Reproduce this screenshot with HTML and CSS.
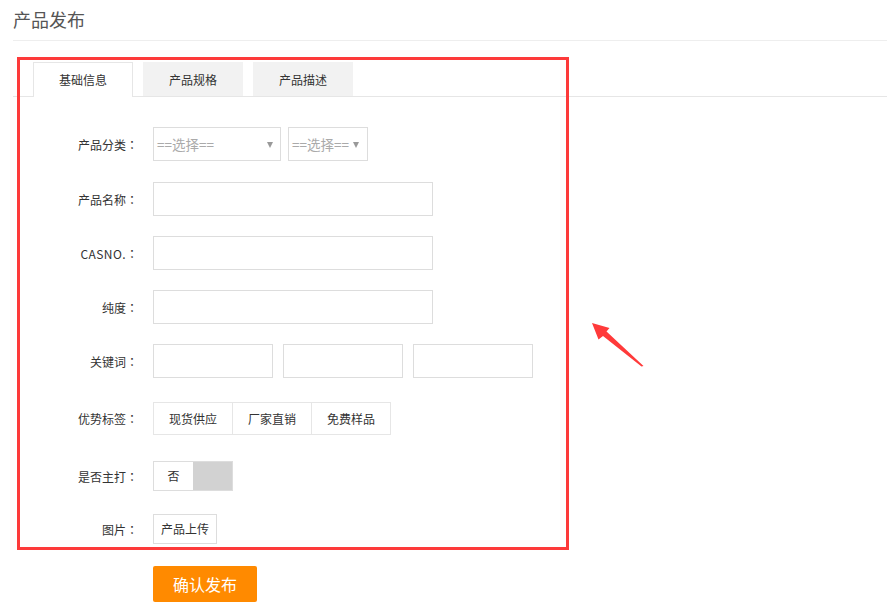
FILE: index.html
```html
<!DOCTYPE html>
<html lang="zh-CN">
<head>
<meta charset="utf-8">
<title>产品发布</title>
<link rel="stylesheet" href="styles.css">
</head>
<body>
<div class="page">
  <h1 class="page-title">产品发布</h1>
  <div class="tabs">
    <div class="tab active">基础信息</div>
    <div class="tab">产品规格</div>
    <div class="tab">产品描述</div>
  </div>
  <form class="form">
    <div class="row row-cat">
      <label class="label">产品分类<span class="colon" lang="zh-TW">：</span></label>
      <div class="select select-wide">==选择==</div>
      <div class="select select-narrow">==选择==</div>
    </div>
    <div class="row">
      <label class="label">产品名称<span class="colon" lang="zh-TW">：</span></label>
      <input class="input input-long" type="text">
    </div>
    <div class="row">
      <label class="label label-latin">CASNO.<span class="colon" lang="zh-TW">：</span></label>
      <input class="input input-long" type="text">
    </div>
    <div class="row">
      <label class="label">纯度<span class="colon" lang="zh-TW">：</span></label>
      <input class="input input-long" type="text">
    </div>
    <div class="row row-kw">
      <label class="label">关键词<span class="colon" lang="zh-TW">：</span></label>
      <input class="input input-short" type="text">
      <input class="input input-short" type="text">
      <input class="input input-short" type="text">
    </div>
    <div class="row row-tags">
      <label class="label">优势标签<span class="colon" lang="zh-TW">：</span></label>
      <div class="seg">
        <span class="seg-item">现货供应</span>
        <span class="seg-item">厂家直销</span>
        <span class="seg-item">免费样品</span>
      </div>
    </div>
    <div class="row row-toggle">
      <label class="label">是否主打<span class="colon" lang="zh-TW">：</span></label>
      <div class="toggle"><span class="toggle-text">否</span><span class="toggle-knob"></span></div>
    </div>
    <div class="row row-pic">
      <label class="label">图片<span class="colon" lang="zh-TW">：</span></label>
      <span class="upload">产品上传</span>
    </div>
    <div class="row row-submit">
      <span class="label"></span>
      <button type="button" class="submit">确认发布</button>
    </div>
  </form>
</div>
<div class="highlight"></div>
<svg class="pointer" width="70" height="60" viewBox="585 315 70 60" xmlns="http://www.w3.org/2000/svg">
  <polygon points="592,323 609.5,328 606.5,331.5 643.5,366 641.5,366.5 603,336 598.5,339.5" fill="#ff3a3a"/>
</svg>
</body>
</html>
```

FILE: styles.css
```css
* { box-sizing: border-box; }

body {
  margin: 0;
  background: #fff;
  font-family: "Noto Sans CJK SC", "Noto Sans", "Liberation Sans", sans-serif;
  color: #333;
  font-size: 12px;
}

.page {
  margin-left: 13px;
}

.page-title {
  margin: 0;
  height: 41px;
  line-height: 38px;
  font-size: 18px;
  font-weight: normal;
  color: #555;
  border-bottom: 1px solid #eee;
}

.tabs {
  display: flex;
  gap: 10px;
  margin-top: 21px;
  padding-left: 20px;
  height: 35px;
  border-bottom: 1px solid #e6e6e6;
}

.tab {
  width: 100px;
  height: 34px;
  line-height: 35px;
  text-align: center;
  background: #f2f2f2;
  color: #333;
  font-size: 12px;
}

.tab.active {
  background: #fff;
  border: 1px solid #e6e6e6;
  border-bottom: none;
  height: 35px;
  line-height: 34px;
}

.form {
  padding-top: 30px;
}

.row {
  display: flex;
  align-items: center;
  margin-bottom: 20px;
}

.row-cat { margin-bottom: 21px; }
.row-kw { margin-bottom: 24px; }
.row-tags { margin-bottom: 26px; }
.row-toggle { margin-bottom: 23px; }
.row-pic { margin-bottom: 22px; }

.label {
  width: 125px;
  margin-right: 15px;
  text-align: right;
  font-size: 12px;
  color: #333;
  flex: none;
}

.label-latin {
  letter-spacing: 0.4px;
}

.colon {
  font-family: "Noto Sans CJK TC", "Noto Sans CJK SC", sans-serif;
  letter-spacing: 0;
}

.select {
  position: relative;
  height: 34px;
  line-height: 32px;
  border: 1px solid #ddd;
  padding-left: 3px;
  font-size: 13.5px;
  color: #aaa;
  flex: none;
}

.select::after {
  content: "";
  position: absolute;
  top: 14px;
  right: 7px;
  border-left: 3px solid transparent;
  border-right: 3px solid transparent;
  border-top: 6px solid #999;
}

.select-wide { width: 128px; margin-right: 7px; }
.select-narrow { width: 80px; }
.select-narrow::after { right: 8px; }

.input {
  height: 34px;
  border: 1px solid #ddd;
  background: #fff;
  margin: 0;
  padding: 0 6px;
  font: inherit;
  outline: none;
  flex: none;
}

.input-long { width: 280px; }
.input-short { width: 120px; margin-right: 10px; }

.seg {
  display: flex;
  height: 33px;
  border: 1px solid #e6e6e6;
}

.seg-item {
  width: 79px;
  line-height: 31px;
  text-align: center;
  color: #333;
  border-left: 1px solid #e6e6e6;
}

.seg-item:first-child { border-left: none; width: 78px; }

.toggle {
  display: flex;
  width: 80px;
  height: 30px;
  border: 1px solid #ddd;
}

.toggle-text {
  width: 39px;
  line-height: 28px;
  text-align: center;
  background: #fff;
  color: #333;
}

.toggle-knob {
  flex: 1;
  background: #d2d2d2;
}

.upload {
  display: inline-block;
  height: 30px;
  line-height: 28px;
  padding: 0 7px;
  border: 1px solid #ddd;
  color: #333;
}

.submit {
  width: 104px;
  height: 36px;
  border: none;
  border-radius: 2px;
  background: #ff8a00;
  color: #fff;
  font-family: inherit;
  font-size: 16px;
  padding: 0;
  cursor: pointer;
}

.highlight {
  position: absolute;
  left: 17px;
  top: 57px;
  width: 552px;
  height: 493px;
  border: 3px solid #fd3a3a;
  pointer-events: none;
}

.pointer {
  position: absolute;
  left: 585px;
  top: 315px;
}
```
